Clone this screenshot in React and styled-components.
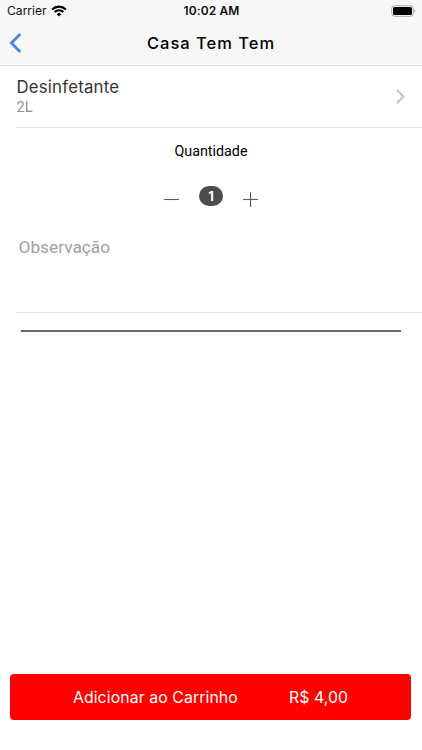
import React from "react";
import styled, { createGlobalStyle } from 'styled-components';

const GlobalStyle = createGlobalStyle`
    * {
        box-sizing: border-box;
    }
    body {
        margin: 0;
        background: #fff;
        font-family: Inter, "Liberation Sans", sans-serif;
    }
`

const Screen = styled('div')`
    width: 100%;
    height: 100vh;
    display: flex;
    flex-direction: column;
    overflow: hidden;
`

const Header = styled('header')`
    height: 66px;
    flex: none;
    background: #f7f7f7;
    border-bottom: 1px solid #dcdcdc;
`

const StatusBar = styled('div')`
    height: 22px;
    padding: 0 6px 0 7px;
    display: grid;
    grid-template-columns: 1fr auto 1fr;
    align-items: center;
    color: #111;
`

const StatusSide = styled('div')`
    display: flex;
    align-items: center;
    gap: 4px;
    justify-content: ${props => props.$end ? "flex-end" : "flex-start"};
`

const Text = styled('span')`
    font-family: ${props => props.$font || "Inter"}, "Liberation Sans", sans-serif;
    font-size: ${props => props.$size}px;
    font-weight: ${props => props.$weight || 400};
    letter-spacing: ${props => props.$spacing || 0}px;
    line-height: ${props => props.$line || 20}px;
    color: ${props => props.$color || "#111"};
    white-space: nowrap;
`

const NavBar = styled('nav')`
    height: 42px;
    padding: 0 9px;
    display: grid;
    grid-template-columns: 1fr auto 1fr;
    align-items: center;
`

const IconButton = styled('button')`
    padding: 0;
    border: 0;
    background: none;
    display: flex;
    justify-self: start;
`

const ProductRow = styled('div')`
    height: 62px;
    flex: none;
    margin-left: 16px;
    padding-right: 17px;
    display: flex;
    align-items: center;
    justify-content: space-between;
    border-bottom: 1px solid #e6e6e6;
`

const ProductInfo = styled('div')`
    display: flex;
    flex-direction: column;
    gap: 1px;
    padding-left: 0.5px;
`

const Quantity = styled('section')`
    height: 100px;
    flex: none;
    padding-top: 13px;
    display: flex;
    flex-direction: column;
    align-items: center;
    gap: 23px;
`

const Stepper = styled('div')`
    display: flex;
    align-items: flex-start;
    gap: 20px;

    button {
        padding-top: 8px;
    }
`

const Badge = styled('span')`
    width: 24px;
    height: 20px;
    margin-top: 2px;
    border-radius: 10px;
    background: #4c4c4c;
    color: #fff;
    display: flex;
    align-items: center;
    justify-content: center;
    font: 700 13px/20px Inter, sans-serif;
`

const Note = styled('textarea')`
    height: 85px;
    flex: none;
    margin: 0 0 0 16px;
    padding: 8px 2.5px;
    border: 0;
    border-bottom: 1px solid #e6e6e6;
    border-radius: 0;
    outline: none;
    resize: none;
    background: none;
    font: 400 17.3px/22px Roboto, sans-serif;

    &::placeholder {
        color: #a0a0a0;
        opacity: 1;
    }
`

const Divider = styled('hr')`
    width: 380px;
    height: 2px;
    flex: none;
    margin: 17px 0 0 21px;
    border: 0;
    background: #686868;
`

const AddButton = styled('button')`
    height: 46px;
    flex: none;
    margin: auto 11px 30px 10px;
    padding: 2px 0 0;
    border: 0;
    border-radius: 4px;
    background: #f00;
    display: flex;
    align-items: center;
    justify-content: center;
    gap: 51px;
`

const WifiIcon = () => (
    <svg width="16" height="12" viewBox="0 0 16 12" fill="none" stroke="#000">
        <path d="M1.1 4.4a9.9 9.9 0 0 1 13.8 0" strokeWidth="2.1" />
        <path d="M3.6 7a6.3 6.3 0 0 1 8.8 0" strokeWidth="2" />
        <path d="M8 11.5 5.7 9.2a3.3 3.3 0 0 1 4.6 0Z" fill="#000" stroke="none" />
    </svg>
)

const BatteryIcon = () => (
    <svg width="25" height="12" viewBox="0 0 25 12">
        <rect x=".75" y=".75" width="21.5" height="10.5" rx="2.8" fill="#fff" stroke="#a2a2a2" />
        <rect x="2" y="2" width="19" height="8" rx="1.6" fill="#000" />
        <path d="M23.3 4.2c1.5.8 1.5 2.8 0 3.6Z" fill="#999" />
    </svg>
)

const BackIcon = () => (
    <svg width="13" height="20" viewBox="0 0 13 20">
        <path d="M11.3 1 2.3 10l9 9" fill="none" stroke="#4587e8" strokeWidth="2.7" />
    </svg>
)

const ForwardIcon = () => (
    <svg width="9" height="15" viewBox="0 0 9 15">
        <path d="m1 1 6.5 6.5L1 14" fill="none" stroke="#c3c3c6" strokeWidth="2" />
    </svg>
)

const StepIcon = ({ plus }) => (
    <svg width="15" height="15" viewBox="0 0 15 15" stroke="#5c5c5c" strokeWidth="1.1">
        <path d="M0 7.5h15" />
        {plus && <path d="M7.5 0v15" />}
    </svg>
)

const App = () => {
    const [quantity, setQuantity] = React.useState(1)

    return (
        <Screen>
            <GlobalStyle />
            <Header>
                <StatusBar>
                    <StatusSide>
                        <Text $size={12.1}>Carrier</Text>
                        <WifiIcon />
                    </StatusSide>
                    <Text $size={12} $weight={600} $spacing={0.1}>10:02 AM</Text>
                    <StatusSide $end>
                        <BatteryIcon />
                    </StatusSide>
                </StatusBar>
                <NavBar>
                    <IconButton aria-label="Voltar"><BackIcon /></IconButton>
                    <Text $size={16.5} $weight={500} $spacing={1} $color="#000">Casa Tem Tem</Text>
                </NavBar>
            </Header>
            <ProductRow>
                <ProductInfo>
                    <Text $size={16.8} $spacing={0.2} $line={21} $color="#333">Desinfetante</Text>
                    <Text $font="Roboto" $size={14.5} $line={18} $color="#909090">2L</Text>
                </ProductInfo>
                <ForwardIcon />
            </ProductRow>
            <Quantity>
                <Text $font="Roboto" $size={14.3} $color="#000">Quantidade</Text>
                <Stepper>
                    <IconButton aria-label="Diminuir" onClick={() => setQuantity(Math.max(1, quantity - 1))}>
                        <StepIcon />
                    </IconButton>
                    <Badge>{quantity}</Badge>
                    <IconButton aria-label="Aumentar" onClick={() => setQuantity(quantity + 1)}>
                        <StepIcon plus />
                    </IconButton>
                </Stepper>
            </Quantity>
            <Note placeholder="Observação" />
            <Divider />
            <AddButton>
                <Text $size={15.8} $spacing={0.1} $color="#fff">Adicionar ao Carrinho</Text>
                <Text $size={15.8} $spacing={0.1} $color="#fff">R$ 4,00</Text>
            </AddButton>
        </Screen>
    )
}

export default App;
